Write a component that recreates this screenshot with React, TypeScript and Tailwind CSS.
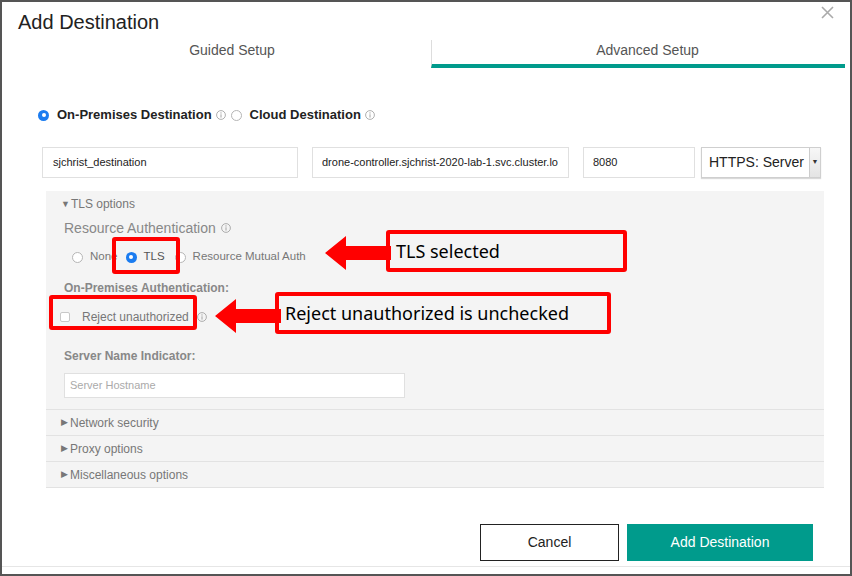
import React from "react";

const Info = ({ size = 10 }: { size?: number }) => (
  <svg width={size} height={size} viewBox="0 0 10 10" className="inline-block shrink-0">
    <circle cx="5" cy="5" r="4.4" fill="none" stroke="#9a9a9a" strokeWidth="0.8" />
    <line x1="5" y1="4.3" x2="5" y2="7.6" stroke="#9a9a9a" strokeWidth="0.9" />
    <circle cx="5" cy="2.9" r="0.6" fill="#9a9a9a" />
  </svg>
);

const Radio = ({ checked = false }: { checked?: boolean }) =>
  checked ? (
    <span className="inline-flex w-[11px] h-[11px] rounded-full bg-[#1b7cf0] items-center justify-center shrink-0">
      <span className="w-[4px] h-[4px] rounded-full bg-white" />
    </span>
  ) : (
    <span className="inline-block w-[11px] h-[11px] rounded-full border border-[#b5b5b5] bg-white shrink-0" />
  );

const Row = ({ label }: { label: string }) => (
  <div className="h-[26px] border-b border-[#e2e2e2] flex items-center pl-[15px] text-[12px] text-[#777]">
    <span className="text-[9px] mr-[2px] text-[#777]">▶</span>
    {label}
  </div>
);

const LeftArrow = ({ x, y }: { x: number; y: number }) => (
  <svg
    className="absolute"
    style={{ left: x, top: y - 17 }}
    width="66"
    height="34"
    viewBox="0 0 66 34"
  >
    <polygon points="0,17 21,0 21,10 66,10 66,24 21,24 21,34" fill="#ff0000" />
  </svg>
);

export default function App() {
  return (
    <div
      className="relative w-[852px] h-[576px] bg-white overflow-hidden"
      style={{ fontFamily: '"Liberation Sans", Arial, sans-serif' }}
    >
      <div className="w-full h-full border-2 border-[#555] flex flex-col">
        {/* Title */}
        <div className="relative pl-[16px] pt-[8px]">
          <div className="text-[20px] leading-[24px] text-[#222]">Add Destination</div>
          <svg className="absolute right-[16px] top-[4px]" width="13" height="13" viewBox="0 0 13 13">
            <path d="M1 1 L12 12 M12 1 L1 12" stroke="#aaa" strokeWidth="1.6" fill="none" />
          </svg>
        </div>

        {/* Tabs */}
        <div className="flex ml-[31px] mr-[5px] mt-[6px] h-[28px]">
          <div className="w-[398px] text-center text-[14px] leading-[20px] text-[#555]">Guided Setup</div>
          <div className="flex-1 border-l border-[#ddd] border-b-4 border-b-[#009b8c] text-center text-[14px] leading-[20px] text-[#555] pl-[18px]">
            Advanced Setup
          </div>
        </div>

        {/* Destination type */}
        <div className="flex items-center ml-[36px] mt-[39px] h-[16px] text-[13px] text-[#222] font-bold">
          <Radio checked />
          <span className="ml-[8px]">On-Premises Destination</span>
          <span className="ml-[4px] flex"><Info /></span>
          <span className="ml-[5px] flex"><Radio /></span>
          <span className="ml-[8px]">Cloud Destination</span>
          <span className="ml-[4px] flex"><Info /></span>
        </div>

        {/* Inputs */}
        <div className="flex items-center ml-[40px] mt-[24px] h-[31px] text-[11px] text-[#222]">
          <div className="w-[256px] h-[31px] border border-[#e0e0e0] flex items-center pl-[10px]">sjchrist_destination</div>
          <div className="ml-[14px] w-[257px] h-[31px] border border-[#e0e0e0] flex items-center pl-[9px] overflow-hidden whitespace-nowrap">
            drone-controller.sjchrist-2020-lab-1.svc.cluster.lo
          </div>
          <div className="ml-[14px] w-[112px] h-[31px] border border-[#e0e0e0] flex items-center pl-[9px]">8080</div>
          <div className="ml-[6px] w-[120px] h-[31px] border border-[#cfcfcf] flex items-stretch shadow-[0_1px_1px_rgba(0,0,0,0.15)]">
            <div className="flex-1 flex items-center pl-[7px] text-[14px] text-[#222]">HTTPS: Server</div>
            <div className="w-[11px] border-l border-[#ccc] bg-gradient-to-b from-[#f7f7f7] to-[#e4e4e4] flex items-center justify-center text-[7px] text-[#333]">▼</div>
          </div>
        </div>

        {/* Gray panel */}
        <div className="ml-[44px] w-[778px] mt-[13px] bg-[#f4f4f4]">
          <div className="pt-[5px] pl-[15px] h-[20px] text-[12px] leading-[14px] text-[#777] flex items-center">
            <span className="text-[9px] mr-[1px]">▼</span>TLS options
          </div>
          <div className="pl-[18px] mt-[8px] flex items-center h-[18px] text-[14px] text-[#888]">
            Resource Authentication
            <span className="ml-[5px] flex"><Info /></span>
          </div>
          <div className="pl-[26px] mt-[12px] flex items-center h-[16px] text-[11.5px] text-[#777]">
            <Radio />
            <span className="ml-[7px]">None</span>
            <span className="ml-[8px] flex"><Radio checked /></span>
            <span className="ml-[7px] text-[#555]">TLS</span>
            <span className="ml-[10px] flex"><Radio /></span>
            <span className="ml-[7px]">Resource Mutual Auth</span>
          </div>
          <div className="pl-[18px] mt-[16px] h-[14px] flex items-center text-[12px] font-bold text-[#888]">
            On-Premises Authentication:
          </div>
          <div className="pl-[14px] mt-[14px] flex items-center h-[16px] text-[12px] text-[#777]">
            <span className="w-[10px] h-[10px] border border-[#c8c8c8] rounded-[2px] bg-white" />
            <span className="ml-[12px]">Reject unauthorized</span>
            <span className="ml-[8px] flex"><Info /></span>
          </div>
          <div className="pl-[18px] mt-[24px] h-[14px] flex items-center text-[12px] font-bold text-[#888]">
            Server Name Indicator:
          </div>
          <div className="ml-[18px] mt-[10px] w-[341px] h-[25px] border border-[#e0e0e0] bg-white flex items-center pl-[5px] text-[11px] text-[#aaa]">
            Server Hostname
          </div>
          <div className="mt-[11px] border-b border-[#e2e2e2]" />
          <Row label="Network security" />
          <Row label="Proxy options" />
          <Row label="Miscellaneous options" />
        </div>

        {/* Buttons */}
        <div className="flex justify-end mt-[36px] mr-[37px] gap-[8px]">
          <div className="w-[139px] h-[37px] border border-[#222] flex items-center justify-center text-[14px] text-[#222]">Cancel</div>
          <div className="w-[186px] h-[37px] bg-[#009b8c] flex items-center justify-center text-[14px] text-white">Add Destination</div>
        </div>
        <div className="mt-[5px] border-t border-[#e6e6e6]" />
      </div>

      {/* Annotations */}
      <div className="absolute left-[112px] top-[237px] w-[68px] h-[37px] border-4 border-[#ff0000] rounded-[3px]" />
      <div className="absolute left-[49px] top-[295px] w-[148px] h-[35px] border-4 border-[#ff0000] rounded-[3px]" />
      <LeftArrow x={325} y={253} />
      <LeftArrow x={215} y={316} />
      <div
        className="absolute left-[386px] top-[230px] w-[241px] h-[42px] border-4 border-[#ff0000] rounded-[3px] flex items-center pl-[6px] text-[18px] text-black"
        style={{ fontFamily: '"Noto Sans", sans-serif' }}
      >
        TLS selected
      </div>
      <div
        className="absolute left-[275px] top-[292px] w-[336px] h-[42px] border-4 border-[#ff0000] rounded-[3px] flex items-center pl-[6px] text-[18px] text-black"
        style={{ fontFamily: '"Noto Sans", sans-serif' }}
      >
        Reject unauthorized is unchecked
      </div>
    </div>
  );
}
